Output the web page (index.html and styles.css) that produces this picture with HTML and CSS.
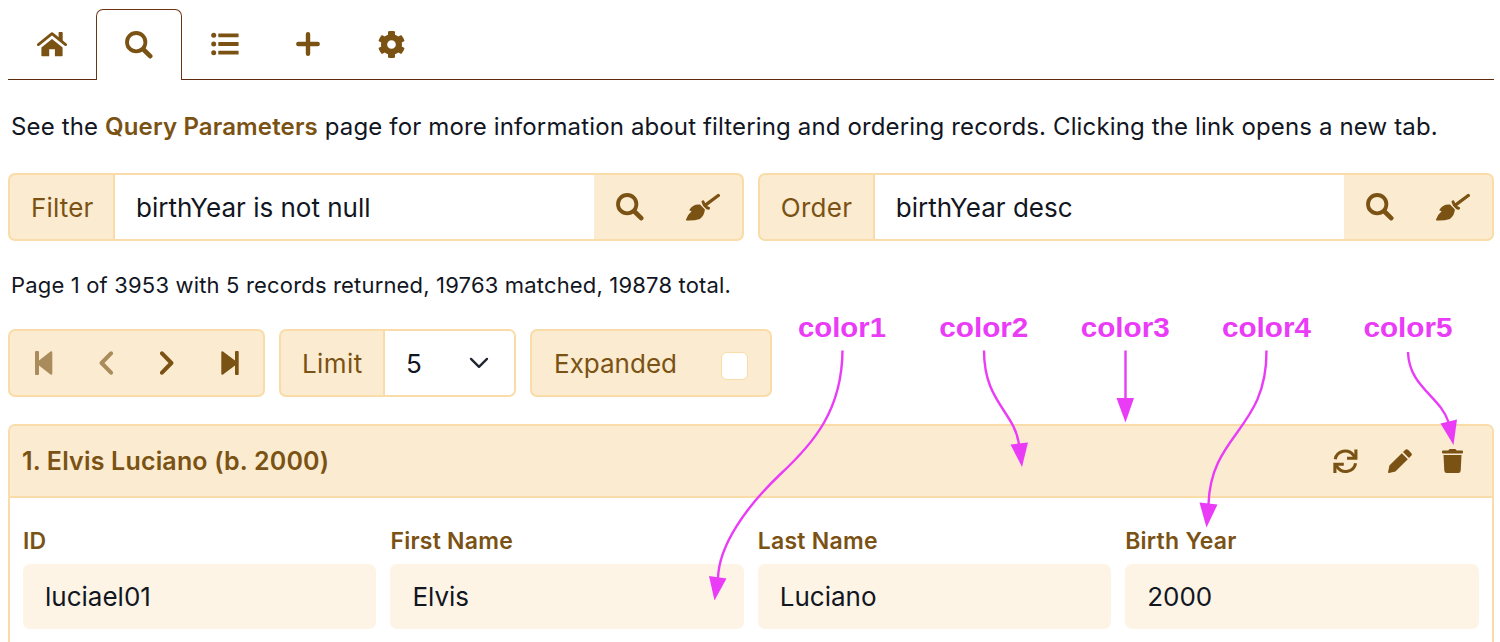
FILE: index.html
```html
<!DOCTYPE html>
<html lang="en">
<head>
<meta charset="utf-8">
<title>Query records</title>
<link rel="stylesheet" href="styles.css">
</head>
<body>
<svg class="defs" width="0" height="0">
  <symbol id="search" viewBox="0 0 28 28"><circle cx="11.2" cy="11.2" r="9.2" fill="none" stroke="currentColor" stroke-width="3.8"/><path d="M18.5 18.5 25.2 25.2" stroke="currentColor" stroke-width="4.6" stroke-linecap="round"/></symbol>
  <symbol id="broom" viewBox="0 0 34 28"><path d="M20 11.6 32.300 2.500" stroke="currentColor" stroke-width="3.300" stroke-linecap="round"/><path d="M17 8.800 18.300 12 21 14.800 22.600 15.200" fill="none" stroke="currentColor" stroke-width="3" stroke-linecap="round" stroke-linejoin="round"/><path d="M14 11.600Q6.500 11 3.200 17.200L5.600 18.200Q2 21.200 0 26.400Q-.2 27.500 1.200 27.500Q9 27.700 13.800 26Q18.400 23 18.900 16.600Z" fill="currentColor"/></symbol>
</svg>
<nav class="tabs">
  <a class="tab home"><svg width="30" height="25" viewBox="0 0 30 25"><path d="M1.4 12.6 15 1.7 28.6 12.6" fill="none" stroke="currentColor" stroke-width="2.8" stroke-linecap="round" stroke-linejoin="round"/><path d="M21.6.8Q21.6 0 22.4 0H25Q25.7 0 25.7.8V9.8L21.6 6.5ZM15 7 25.6 15.5V23.5Q25.6 24.3 24.8 24.3H17.9V17.2H12.2V24.3H5.3Q4.4 24.3 4.4 23.5V15.5Z" fill="currentColor"/></svg></a>
  <a class="tab active"><svg width="28" height="28"><use href="#search"/></svg></a>
  <a class="tab list"><svg width="28" height="24" viewBox="0 0 28 24"><g fill="currentColor"><circle cx="2.7" cy="3.3" r="2.5"/><circle cx="2.7" cy="12" r="2.5"/><circle cx="2.7" cy="20.7" r="2.5"/><rect x="7.3" y="1.4" width="20.3" height="3.8" rx=".6"/><rect x="7.3" y="10.1" width="20.3" height="3.8" rx=".6"/><rect x="7.3" y="18.8" width="20.3" height="3.8" rx=".6"/></g></svg></a>
  <a class="tab plus"><svg width="24" height="24" viewBox="0 0 24 24"><path d="M12 2.3V21.7M2.3 12H21.7" stroke="currentColor" stroke-width="4.4" stroke-linecap="round"/></svg></a>
  <a class="tab gear"><svg width="27" height="27" viewBox="8 8 496 496"><path fill="currentColor" d="M487.4 315.7l-42.6-24.6c4.3-23.2 4.3-47 0-70.2l42.6-24.6c4.9-2.8 7.1-8.6 5.5-14-11.1-35.6-30-67.8-54.7-94.6-3.8-4.1-10-5.1-14.8-2.3L380.8 110c-17.9-15.4-38.5-27.3-60.8-35.1V25.8c0-5.6-3.9-10.5-9.4-11.7-36.7-8.2-74.3-7.8-109.2 0-5.5 1.2-9.4 6.1-9.4 11.7V75c-22.2 7.9-42.8 19.8-60.8 35.1L88.7 85.5c-4.9-2.8-11-1.9-14.8 2.3-24.7 26.7-43.6 58.9-54.7 94.6-1.7 5.4.6 11.2 5.5 14L67.3 221c-4.3 23.2-4.3 47 0 70.2l-42.6 24.6c-4.9 2.8-7.1 8.6-5.5 14 11.1 35.6 30 67.8 54.7 94.6 3.8 4.1 10 5.1 14.8 2.3l42.6-24.6c17.9 15.4 38.5 27.3 60.8 35.1v49.2c0 5.6 3.9 10.5 9.4 11.7 36.7 8.2 74.3 7.8 109.2 0 5.5-1.2 9.4-6.1 9.4-11.7v-49.2c22.2-7.9 42.8-19.8 60.8-35.1l42.6 24.6c4.9 2.8 11 1.9 14.8-2.3 24.7-26.7 43.6-58.9 54.7-94.6 1.5-5.5-.7-11.3-5.6-14.1zM256 336c-44.1 0-80-35.9-80-80s35.900-80 80-80 80 35.900 80 80-35.900 80-80 80z"/></svg></a>
</nav>
<p class="intro">See the <a>Query Parameters</a> page for more information about filtering and ordering records. Clicking the link opens a new tab.</p>
<div class="queries">
  <div class="group">
    <label class="addon filter-label">Filter</label>
    <div class="entry">birthYear is not null</div>
    <div class="actions"><svg width="28" height="28"><use href="#search"/></svg><svg width="34" height="28"><use href="#broom"/></svg></div>
  </div>
  <div class="group">
    <label class="addon order-label">Order</label>
    <div class="entry">birthYear desc</div>
    <div class="actions"><svg width="28" height="28"><use href="#search"/></svg><svg width="34" height="28"><use href="#broom"/></svg></div>
  </div>
</div>
<p class="status">Page 1 of 3953 with 5 records returned, 19763 matched, 19878 total.</p>
<div class="controls">
  <div class="group pager">
    <svg class="off" width="18" height="24" viewBox="0 0 18 24"><path fill="currentColor" d="M1 0H3Q4 0 4 1V9.5L15.5.4Q17.3-.3 17.3 1.5V22.5Q17.3 24.3 15.5 23.6L4 14.5V23Q4 24 3 24H1Q0 24 0 23V1Q0 0 1 0Z"/></svg>
    <svg class="off" width="15" height="24" viewBox="0 0 15 24"><path d="M12 2.3 2.6 12 12 21.7" fill="none" stroke="currentColor" stroke-width="4" stroke-linecap="round" stroke-linejoin="round"/></svg>
    <svg width="15" height="24" viewBox="0 0 15 24"><path d="M2 2.3 11.4 12 2 21.7" fill="none" stroke="currentColor" stroke-width="4" stroke-linecap="round" stroke-linejoin="round"/></svg>
    <svg width="18" height="24" viewBox="0 0 18 24"><path fill="currentColor" d="M17 0H15Q14 0 14 1V9.5L2 .4Q.3-.3.3 1.5V22.5Q.3 24.3 2 23.6L14 14.5V23Q14 24 15 24H17Q17.7 24 17.7 23V1Q17.7 0 17 0Z"/></svg>
  </div>
  <div class="group limit">
    <label class="addon limit-label">Limit</label>
    <div class="entry choice"><span>5</span><svg width="20" height="14" viewBox="0 0 20 14"><path d="M2 2.9 10 10.9 18 2.9" fill="none" stroke="#202632" stroke-width="2.3" stroke-linecap="round" stroke-linejoin="round"/></svg></div>
  </div>
  <div class="group expanded"><span>Expanded</span><i class="check"></i></div>
</div>
<section class="card">
  <header class="card-head">
    <h2>1. Elvis Luciano (b. 2000)</h2>
    <div class="tools">
      <svg width="25" height="25" viewBox="0 0 25 25"><g fill="none" stroke="currentColor" stroke-width="3.1"><path d="M2.200 10.300A10.200 10.200 0 0 1 20.500 6.300L22 8.300"/><path d="M22.600 14.200A10.200 10.200 0 0 1 4.300 18.200L2.800 16.200"/><path d="M22.900.4V9.200H14"/><path d="M1.900 24.100V15.300H10.800"/></g></svg>
      <svg width="24" height="24" viewBox="0 0 24 24"><path fill="currentColor" d="M.1 23.1 1.4 16.6 13.8 4.3 19.8 10.3 7.4 22.6 1 23.9Q0 24.1.1 23.1ZM15 3.1 17.3.8Q18.7-.5 20.1.8L23.2 3.9Q24.5 5.4 23.2 6.8L21 9.1Z"/></svg>
      <svg width="21" height="24" viewBox="0 0 21 24"><path fill="currentColor" d="M1 1.4H6.3L7 .4Q7.3 0 8 0H13Q13.6 0 14 .4L14.6 1.4H20Q21 1.4 21 2.4V3.4Q21 4.4 20 4.4H1Q0 4.4 0 3.4V2.4Q0 1.4 1 1.4ZM1.5 6H19.5L18.7 21.8Q18.5 24 16.3 24H4.7Q2.5 24 2.3 21.8Z"/></svg>
    </div>
  </header>
  <div class="fields">
    <div class="field"><label>ID</label><div class="value">luciael01</div></div>
    <div class="field"><label>First Name</label><div class="value">Elvis</div></div>
    <div class="field"><label>Last Name</label><div class="value">Luciano</div></div>
    <div class="field"><label>Birth Year</label><div class="value">2000</div></div>
  </div>
</section>
<svg class="notes" width="1500" height="642" viewBox="0 0 1500 642">
  <g class="note-text">
    <text x="798" y="336.5" textLength="88" lengthAdjust="spacingAndGlyphs">color1</text>
    <text x="939.3" y="336.5" textLength="89" lengthAdjust="spacingAndGlyphs">color2</text>
    <text x="1080.7" y="336.5" textLength="89" lengthAdjust="spacingAndGlyphs">color3</text>
    <text x="1222" y="336.5" textLength="89" lengthAdjust="spacingAndGlyphs">color4</text>
    <text x="1363.5" y="336.5" textLength="89" lengthAdjust="spacingAndGlyphs">color5</text>
  </g>
  <g class="note-line">
    <path d="M842.5 350.5C842 410 814 443 780 474.500C746 507 719 545 718 578"/>
    <path d="M984 350.500C984 402 1014 411 1019 444"/>
    <path d="M1125.500 350.500V400"/>
    <path d="M1266.500 350.500C1267 430 1211 433 1208.500 504"/>
    <path d="M1408 352C1409 387 1440 396 1448.500 422"/>
  </g>
  <g class="note-head">
    <path d="M709 576 726.500 578.500 714.500 600.500Z"/>
    <path d="M1010.500 444.500 1028 442.500 1022 467Z"/>
    <path d="M1116.500 398H1134L1125.500 422.500Z"/>
    <path d="M1199.500 502.500 1217.500 504.500 1206.500 527.500Z"/>
    <path d="M1440.500 423.500 1457 419.500 1453.500 445Z"/>
  </g>
</svg>
</body>
</html>
```
FILE: styles.css
```css
* { box-sizing: border-box; }
html { overflow: hidden; }
body {
  display: flex;
  flex-direction: column;
  margin: 0;
  padding: 9px 6.5px 0 8px;
  height: 642px;
  overflow: hidden;
  background: #fff;
  color: #12161f;
  font-family: Inter, "Liberation Sans", sans-serif;
  font-size: 26px;
}
svg { display: block; flex: none; }
.defs, .notes { position: absolute; left: 0; top: 0; }
.tabs { display: flex; height: 71px; color: #7a5214; }
.tab { display: flex; align-items: center; justify-content: center; border-bottom: 1.5px solid #632a12; width: 84px; }
.tabs::after { content: ""; flex: 1; border-bottom: 1.5px solid #632a12; }
.home { width: 88px; }
.active { width: 86px; border: 1.5px solid #6b3514; border-bottom: 0; border-radius: 7px 7px 0 0; }
.list { width: 85px; }
.plus { width: 82px; }
.gear { width: 84px; }
.intro { margin: 32px 0 0 3px; height: 30px; line-height: 30px; font-size: 24px; letter-spacing: .14px; white-space: nowrap; }
.intro a { color: #7a5214; font-weight: 600; }
.queries { display: flex; gap: 14px; margin-top: 31px; }
.queries .group { flex: 1; }
.group { display: flex; height: 68px; border: 2px solid #f9dca8; border-radius: 7px; background: #fbebd0; color: #7a5214; overflow: hidden; }
.addon { display: flex; align-items: center; padding-left: 21px; border-right: 2px solid #f9dca8; }
.filter-label { width: 105px; letter-spacing: .15px; }
.order-label { width: 115px; letter-spacing: .3px; }
.limit-label { width: 104px; letter-spacing: .4px; }
.entry { flex: 1; display: flex; align-items: center; padding-left: 21px; background: #fff; color: #12161f; }
.actions { width: 148px; display: flex; align-items: center; gap: 42px; padding-left: 22px; }
.status { margin: 30px 0 0 3px; height: 28px; line-height: 28px; font-size: 22px; letter-spacing: .17px; white-space: nowrap; }
.controls { display: flex; gap: 14px; margin-top: 30px; }
.pager { width: 257px; align-items: center; padding: 0 24px 0 25px; justify-content: space-between; }
.off { opacity: .62; }
.limit { width: 237px; }
.choice { justify-content: space-between; padding: 0 25px 0 21px; }
.expanded { width: 242px; align-items: center; justify-content: space-between; padding: 0 22px; }
.check { width: 27px; height: 28px; margin-top: 6px; border: 1.5px solid #f9dca8; border-radius: 6px; background: #fff; }
.card { flex: 1; margin-top: 27px; border: 2px solid #f9dca8; border-bottom: 0; border-radius: 7px 7px 0 0; overflow: hidden; }
.card-head { display: flex; align-items: center; justify-content: space-between; height: 72px; padding: 0 29px 0 12px; border-bottom: 2px solid #f9dca8; background: #fbebd0; color: #7a5214; }
.card-head h2 { margin: 0; font-size: 25px; font-weight: 600; letter-spacing: .18px; }
.tools { display: flex; gap: 30px; }
.fields { display: grid; grid-template-columns: repeat(4, 1fr); gap: 14px; padding: 28px 13px 0; }
.field label { display: block; height: 30px; line-height: 30px; margin-bottom: 8px; font-size: 23px; font-weight: 600; letter-spacing: .25px; color: #7a5214; }
.value { display: flex; align-items: center; height: 65px; padding-left: 22px; border-radius: 7px; background: #fdf4e6; }
.note-text { font: bold 28.5px "Liberation Sans", Arial, sans-serif; fill: #ea3cf7; }
.note-line { fill: none; stroke: #ea3cf7; stroke-width: 2.4px; }
.note-head { fill: #ea3cf7; }
```
